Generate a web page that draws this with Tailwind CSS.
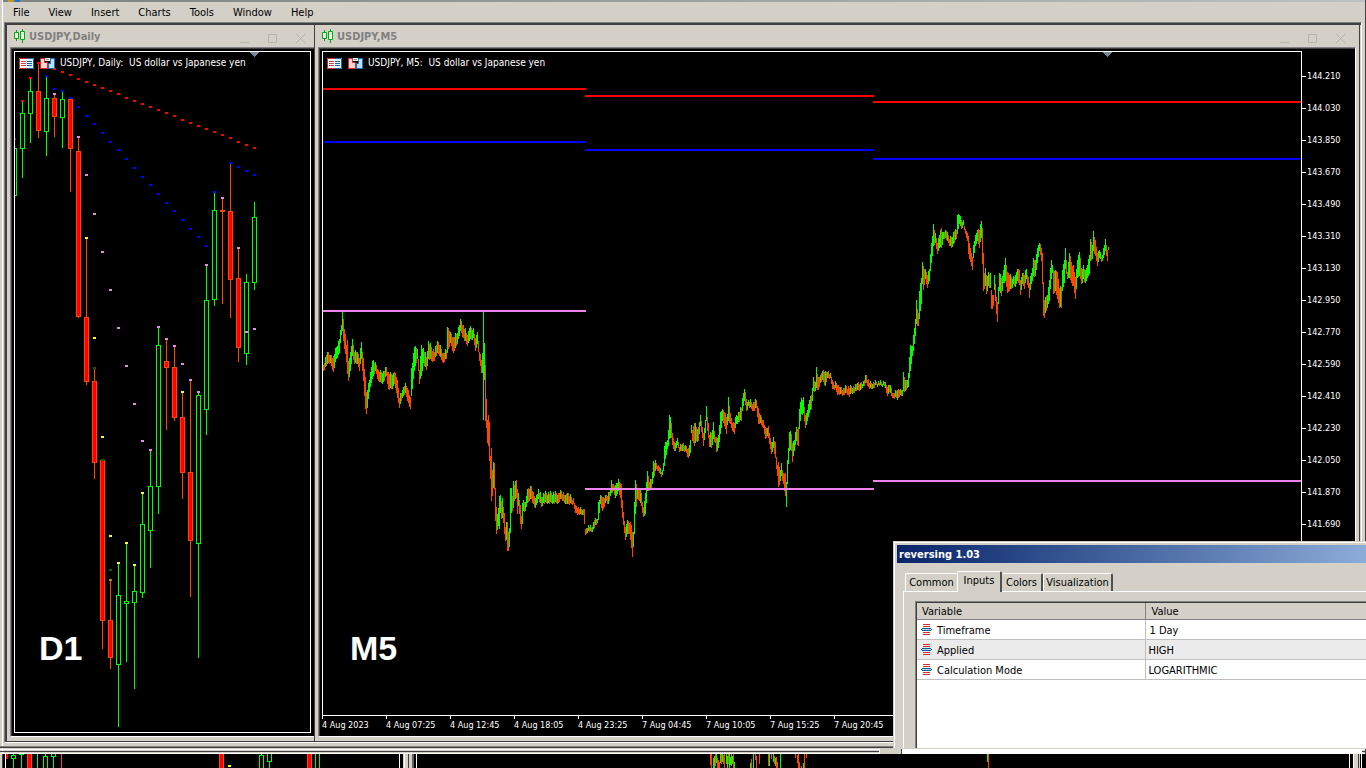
<!DOCTYPE html>
<html lang="en">
<head>
<meta charset="utf-8">
<title>USDJPY charts</title>
<script src="https://cdn.jsdelivr.net/npm/@tailwindcss/browser@4"></script>
</head>
<body class="h-screen overflow-hidden bg-[#d4d0c8] font-['DejaVu_Sans_Condensed','DejaVu_Sans',sans-serif] text-[11px] leading-4 text-black">
<svg class="hidden" aria-hidden="true">
  <defs>
    <g id="i-candles"><path d="M2.500 1v2M2.500 10v2M8.500 0v2M8.500 11v3" stroke="#00a818" fill="none"/><path d="M.5 3.500h4v6h-4zM6.500 2.500h4v8h-4z" fill="#e6f8e0" stroke="#00a818"/></g>
    <g id="i-grid"><path d="M0 0h8v11H0z" fill="#fff"/><path d="M8 .5H.5v10H8" stroke="#c8282c" fill="none"/><path d="M8 0h7v11H8z" fill="#e4f4fc"/><path d="M8 .5h6.500v10H8" stroke="#1468a8" fill="none"/><path d="M2 3.500h5M2 5.500h5M2 7.500h5" stroke="#e04040"/><path d="M8 3.500h5M8 5.500h5M8 7.500h5" stroke="#1468a8"/></g>
    <g id="i-trade"><path d="M.5.500h4v4h3v6h-7z" fill="#fcd4d0" stroke="#d02c2c"/><path d="M10.500.5h4v10h-6v-5h2z" fill="#b8e0fc" stroke="#1474c0"/><path d="M5 0h5v3H5z" fill="#fff"/><path d="M6 1.500h3" stroke="#888"/></g>
    <g id="i-param"><path d="M2 .5h7M2 2.500h7M2 8.500h7M2 10.500h7" stroke="#d83030"/><path d="M1 4h9v1h1v1h-1v1H1V6H0V5h1z" fill="#0c5c9c"/><path d="M1 5.500h9" stroke="#a8dcfc"/></g>
    <g id="i-min"><path d="M0 8.500h9" stroke="#b4b4b4"/></g>
    <g id="i-max"><path d="M.5.5h8v8h-8z" stroke="#b4b4b4" fill="none"/></g>
    <g id="i-close"><path d="M0 0l9 9M9 0L0 9" stroke="#b4b4b4"/></g>
  </defs>
</svg>

<div class="flex h-full flex-col">
  <div class="flex min-h-0 flex-1 flex-col pl-[2px]">
    <div class="flex min-h-0 flex-1 flex-col border-r border-l border-r-[#404040] border-l-white">
      <div class="flex h-[2px] shrink-0 bg-linear-to-r from-[#808080] to-[#c0c0c4]">
        <span class="ml-[5px] w-[5px] bg-[#c89c18]"></span><span class="ml-[2px] w-[5px] bg-[#1874c8]"></span>
      </div>
      <nav class="flex h-5 shrink-0 items-center gap-[19px] pt-[2px] pl-[10px]">
        <button>File</button><button>View</button><button>Insert</button><button>Charts</button><button>Tools</button><button>Window</button><button>Help</button>
      </nav>

      <main class="mr-[3px] ml-px flex min-h-0 flex-1 border-t border-r border-b border-l border-t-[#808080] border-r-white border-b-white border-l-[#808080]">
        <div class="flex min-h-0 min-w-0 flex-1 border-t-2 border-l-2 border-[#404040]">
          <!-- Daily window -->
          <section class="flex w-[308px] shrink-0 flex-col border-r border-b border-[#404040]">
            <header class="flex h-[22px] shrink-0 items-center pr-[9px] pl-[7px]">
              <svg width="12" height="14"><use href="#i-candles"/></svg>
              <h2 class="ml-[3px] flex-1 pt-[2px] font-bold text-[#808080]">USDJPY,Daily</h2>
              <div class="flex gap-[19px] pt-1">
                <button aria-label="Minimize"><svg width="9" height="9" class="block"><use href="#i-min"/></svg></button>
                <button aria-label="Maximize"><svg width="9" height="9" class="block"><use href="#i-max"/></svg></button>
                <button aria-label="Close"><svg width="9" height="9" class="block"><use href="#i-close"/></svg></button>
              </div>
            </header>
            <div class="mb-1 ml-[3px] flex min-h-0 flex-1 border-t border-b border-l border-t-[#808080] border-b-white border-l-[#808080]">
              <div class="flex min-w-0 flex-1 border-t border-l border-[#404040] bg-black pt-[2px] pr-[3px] pb-[3px] pl-[2px]">
                <div class="relative min-w-0 flex-1 overflow-hidden border border-white">
                  <svg class="block h-full w-full" shape-rendering="crispEdges"><g id="daily" transform="translate(-15 -52)"></g></svg>
                  <div class="absolute top-1 left-1 flex items-center text-[10px] leading-[14px] whitespace-pre text-white">
                    <svg width="15" height="11"><use href="#i-grid"/></svg>
                    <svg width="15" height="11" class="ml-[6px]"><use href="#i-trade"/></svg>
                    <span class="ml-[5px]">USDJPY, Daily:  US dollar vs Japanese yen</span>
                  </div>
                  <div class="absolute bottom-[64px] left-6 font-['Liberation_Sans',sans-serif] text-[34px] leading-10 font-bold text-white">D1</div>
                </div>
              </div>
            </div>
          </section>

          <!-- M5 window -->
          <section class="flex min-w-0 flex-1 flex-col border-r border-b border-[#404040]">
            <header class="flex h-[22px] shrink-0 items-center pr-[14px] pl-[7px]">
              <svg width="12" height="14"><use href="#i-candles"/></svg>
              <h2 class="ml-[3px] flex-1 pt-[2px] font-bold text-[#808080]">USDJPY,M5</h2>
              <div class="flex gap-[19px] pt-1">
                <button aria-label="Minimize"><svg width="9" height="9" class="block"><use href="#i-min"/></svg></button>
                <button aria-label="Maximize"><svg width="9" height="9" class="block"><use href="#i-max"/></svg></button>
                <button aria-label="Close"><svg width="9" height="9" class="block"><use href="#i-close"/></svg></button>
              </div>
            </header>
            <div class="mx-[3px] mb-1 flex min-h-0 flex-1 border border-t-[#808080] border-r-white border-b-white border-l-[#808080]">
              <div class="flex min-w-0 flex-1 flex-col border-t border-l border-[#404040] bg-black pt-[2px] pl-[2px] text-[9px] text-white">
                <div class="flex min-h-0 flex-1">
                  <div class="relative min-w-0 flex-1 overflow-hidden border border-white">
                    <svg class="block h-full w-full" shape-rendering="crispEdges"><g id="m5" transform="translate(-323 -52)"></g></svg>
                    <div class="absolute top-1 left-1 flex items-center text-[10px] leading-[14px] whitespace-pre">
                      <svg width="15" height="11"><use href="#i-grid"/></svg>
                      <svg width="15" height="11" class="ml-[6px]"><use href="#i-trade"/></svg>
                      <span class="ml-[5px]">USDJPY, M5:  US dollar vs Japanese yen</span>
                    </div>
                    <div class="absolute bottom-[47px] left-[27px] font-['Liberation_Sans',sans-serif] text-[34px] leading-10 font-bold">M5</div>
                  </div>
                  <ol id="prices" class="w-[53px] shrink-0 overflow-hidden pt-[9px]"></ol>
                </div>
                <ol id="dates" class="flex h-5 shrink-0 overflow-hidden"></ol>
              </div>
            </div>
          </section>
          <div class="w-px"></div>
        </div>
      </main>
      <div class="-ml-[3px] flex h-[11px] shrink-0 flex-col">
        <div class="h-[3px]"></div><div class="h-px bg-[#808080]"></div><div class="h-px bg-[#404040]"></div><div class="h-px"></div><div class="h-px bg-white"></div><div class="h-px"></div><div class="h-px bg-[#404040]"></div><div class="h-px"></div><div class="h-px bg-white"></div>
      </div>
    </div>
  </div>
  <!-- Top edge of the charts below -->
  <div class="h-[14px] shrink-0 overflow-hidden bg-black">
    <svg class="block h-full w-full" shape-rendering="crispEdges"><g id="lower" transform="translate(0 -754)"></g></svg>
  </div>
</div>

<div class="absolute right-1 bottom-[14px] left-[879px] flex h-[5px] bg-white">
  <div class="w-[22px] border-l border-white bg-[#d4d0c8]"></div><div class="w-px bg-[#404040]"></div>
</div>

<!-- Indicator settings dialog -->
<div role="dialog" aria-labelledby="dlg" class="absolute top-[541px] right-0 bottom-[19px] left-[893px] border-t border-b border-l border-[#d4d0c8] bg-[#d4d0c8]">
  <div class="flex h-full flex-col overflow-hidden border-t border-l border-white pt-[2px] pl-[2px]">
    <h1 id="dlg" class="h-[18px] shrink-0 bg-linear-to-r from-[#0a246a] to-[#8cacd8] pt-px pl-[2px] leading-[18px] font-bold text-white">reversing 1.03</h1>
    <div role="tablist" class="mt-2 ml-2 flex h-5 shrink-0 items-end">
      <button role="tab" class="h-[18px] w-[52px] rounded-t-[2px] border-t border-l border-white pt-px">Common</button>
      <button role="tab" aria-selected="true" class="relative -mb-px h-[21px] w-[45px] rounded-t-[2px] border-t border-r-2 border-l border-t-white border-r-[#505050] border-l-white bg-[#d4d0c8] pb-[2px]">Inputs</button>
      <button role="tab" class="h-[18px] w-[41px] rounded-t-[2px] border-t border-r-2 border-t-white border-r-[#505050] pt-px">Colors</button>
      <button role="tab" class="h-[18px] w-[70px] rounded-t-[2px] border-t border-r-2 border-l border-t-white border-r-[#505050] border-l-white pt-px">Visualization</button>
    </div>
    <div class="ml-[6px] flex min-h-0 flex-1 border-t border-l border-white pt-[9px] pl-[11px]">
      <div class="min-w-0 flex-1 border-t border-l border-[#808080]">
        <div class="h-full border-t border-l border-[#404040] bg-white">
          <table class="w-full table-fixed border-collapse text-left">
            <thead>
              <tr class="h-4 bg-[#d4d0c8]"><th class="w-[228px] border-r border-b border-[#808080] p-0 pt-[2px] pl-[5px] leading-[14px] font-normal">Variable</th><th class="border-b border-[#808080] p-0 pt-[2px] pl-[6px] leading-[14px] font-normal">Value</th></tr>
            </thead>
            <tbody>
              <tr class="h-5 border-b border-[#c0c0c0]"><td class="border-r border-[#c0c0c0] p-0 pl-1"><span class="flex items-center gap-[5px]"><svg width="11" height="11"><use href="#i-param"/></svg><span class="pt-[2px]">Timeframe</span></span></td><td class="p-0 pt-[2px] pl-1">1 Day</td></tr>
              <tr class="h-5 border-b border-[#c0c0c0] bg-[#ebebeb]"><td class="border-r border-[#c0c0c0] p-0 pl-1"><span class="flex items-center gap-[5px]"><svg width="11" height="11"><use href="#i-param"/></svg><span class="pt-[2px]">Applied</span></span></td><td class="p-0 pt-[2px] pl-[3px]">HIGH</td></tr>
              <tr class="h-5 border-b border-[#c0c0c0]"><td class="border-r border-[#c0c0c0] p-0 pl-1"><span class="flex items-center gap-[5px]"><svg width="11" height="11"><use href="#i-param"/></svg><span class="pt-[2px]">Calculation Mode</span></span></td><td class="p-0 pt-[2px] pl-[3px]">LOGARITHMIC</td></tr>
            </tbody>
          </table>
        </div>
      </div>
    </div>
  </div>
</div>

<script>
const LIME = '#00ff00', ORANGE = '#ff4500', RED = '#ff0000', BLUE = '#0000ff', VIOLET = '#ee82ee', YELLOW = '#ffff00', DARK = '#006400';
const rect = (x, y, w, h, c) => `<rect x="${x}" y="${y}" width="${w}" height="${h}" fill="${c}"/>`;

// Daily candles: x, high, low, body top, body bottom, rising
const daily = [[14,148,195,148,195,1],[22,101,178,113,148,1],[30,78,143,91,113,1],[38,63,138,91,130,0],[46,76,156,98,131,1],[54,94,137,98,116,0],[62,91,148,99,117,1],[70,98,192,99,148,0],[78,137,318,151,316,0],[86,238,385,317,381,0],[94,368,479,381,462,0],[102,460,649,460,620,0],[110,580,669,620,657,0],[118,563,727,595,664,1],[126,543,662,601,603,1],[134,565,689,591,602,1],[142,493,598,524,592,1],[150,450,568,486,530,1],[158,327,514,345,486,1],[166,339,430,361,367,0],[174,346,421,367,417,0],[182,392,499,417,472,0],[190,380,597,472,540,0],[198,392,658,395,543,1],[206,265,435,300,409,1],[214,192,306,210,299,1],[222,198,304,210,211,0],[230,163,318,211,279,0],[238,248,362,278,347,0],[246,274,365,282,353,1],[254,202,290,217,282,1]];
const candle = ([x, hi, lo, t, b, up]) => {
  const c = up ? LIME : ORANGE;
  return rect(x, hi, 1, lo - hi, c) + rect(x - 2, t, 5, b - t + 1, c) + (b - t > 1 ? rect(x - 1, t + 1, 3, b - t - 1, up ? '#000' : RED) : '');
};
const dot = (c, list) => list.map(([x, y]) => rect(x - 1, y - 1, 3, 2, c)).join('');
const reds = [[14,139],[22,101],[30,78],[38,63]];
for (let i = 0; i <= 26; i++) reds.push([46 + i * 8, Math.round(66 + i * 3.15)]);
const blues = [[46,76],[54,89],[62,91],[70,98],[214,192],[230,163],[238,167],[246,171],[254,175]];
for (let i = 0; i <= 16; i++) blues.push([78 + i * 8, Math.round(107 + i * 8.69)]);
document.getElementById('daily').innerHTML =
  daily.map(candle).join('') + dot(RED, reds) + dot(BLUE, blues) +
  dot(VIOLET, [[54,94],[78,137],[86,175],[94,214],[102,252],[110,290],[118,328],[126,366],[134,404],[142,441],[150,450],[158,327],[166,339],[174,346],[182,364],[190,380],[198,392],[206,265],[222,198],[238,248],[246,332],[254,329]]) +
  dot(YELLOW, [[86,238],[94,338],[102,437],[110,536],[118,563],[126,543],[134,565],[142,493],[182,392]]) +
  dot(DARK, [[94,368],[102,460],[110,570]]) + dot('#c08010', [[110,580]]) +
  '<path d="M250 52h9l-4.500 5z" fill="#778899"/>';

// M5 price range samples: x, high, low
const raw = `323 365 370 327 352 363 330 355 362 333 356 371 336 347 358 339 339 352 341 325 334 342 312 330 343 319 340 346 345 361 347 340 373 348 361 380 350 352 370 352 339 355 354 352 363 357 352 363 359 358 370 361 342 358 363 358 380 365 377 408 366 392 413 369 380 391 372 361 378 375 362 370 378 370 380 382 373 383 386 367 375 388 372 388 392 375 388 394 372 383 397 380 397 399 398 407 402 390 397 405 383 392 407 388 400 410 397 408 411 368 395 414 347 370 417 349 358 419 370 383 421 345 375 423 348 362 426 357 369 428 341 358 431 347 360 434 352 360 437 341 352 439 345 355 443 353 362 446 350 358 447 327 352 450 332 342 453 337 352 457 333 343 460 319 330 463 325 337 467 335 345 469 328 340 473 328 337 475 338 350 477 332 343 479 352 360 481 360 372 482 353 372 483 312 419 484 343 379 485 365 420 486 399 427 487 420 442 488 415 445 489 422 460 490 456 478 491 448 500 492 470 495 493 462 487 494 463 488 495 488 520 496 507 533 497 514 529 498 508 525 499 496 528 500 495 512 501 501 518 502 498 517 503 507 522 504 513 533 505 527 540 506 522 539 507 522 550 508 532 550 509 528 546 510 488 532 511 488 512 512 496 510 513 481 507 514 485 500 516 480 497 517 489 513 518 493 505 519 500 513 520 505 523 521 516 528 522 503 523 523 500 510 525 502 510 527 489 502 529 489 500 531 486 498 533 492 503 535 498 507 538 489 498 541 497 506 543 493 502 558 493 502 561 491 498 565 495 503 567 493 503 571 497 503 573 498 503 575 505 512 578 507 513 582 510 514 583 509 514 584 509 523 585 529 534 588 525 530 591 528 531 594 520 527 597 519 522 598 502 519 600 495 503 602 497 510 604 498 506 606 495 500 608 492 503 610 490 495 611 480 492 613 484 490 615 485 497 618 479 490 620 483 497 621 484 507 623 512 524 625 527 539 627 520 533 629 523 533 631 525 547 632 532 556 633 532 546 634 502 533 635 480 513 637 488 498 639 490 500 641 493 505 643 507 516 645 493 513 647 471 490 649 482 490 651 479 487 653 461 477 656 463 468 659 467 472 661 472 476 663 463 470 664 446 465 667 440 448 668 430 445 669 415 438 671 423 437 673 438 448 675 443 450 677 438 444 679 447 451 682 444 450 685 445 450 688 448 457 690 440 452 691 425 432 692 430 440 694 423 445 696 427 440 698 427 440 700 415 425 702 427 437 703 433 445 705 420 432 706 406 420 708 423 437 709 435 446 711 433 447 713 422 438 715 437 442 716 437 451 718 435 447 720 412 433 722 409 420 724 412 425 726 417 433 727 414 424 728 397 420 730 413 423 732 423 430 734 423 433 736 415 423 738 412 421 741 408 420 742 398 410 744 389 400 746 399 410 748 400 405 751 402 408 753 402 410 756 400 407 758 408 423 760 415 422 763 420 427 765 427 438 767 428 435 768 426 437 770 438 448 771 442 453 773 437 447 775 442 457 776 457 468 777 465 475 778 462 486 780 470 480 781 463 475 783 473 483 785 473 495 786 482 506 787 460 483 788 448 463 789 432 450 791 434 450 792 443 461 794 440 450 796 427 440 798 427 445 799 409 428 801 398 413 803 397 412 805 415 427 807 410 420 809 400 412 811 395 408 813 377 390 815 382 390 816 367 387 818 377 389 820 375 382 822 371 379 825 371 385 827 372 377 830 373 377 832 380 388 834 385 389 835 381 387 837 385 394 840 387 393 843 388 394 846 386 392 849 388 396 851 386 392 854 387 392 857 383 389 860 383 389 863 381 385 866 375 382 869 383 388 873 382 387 876 382 384 884 382 385 887 387 395 889 385 391 891 388 395 893 393 397 896 391 397 897 390 399 900 389 394 902 390 395 903 372 390 905 380 390 907 380 387 908 373 386 909 357 377 910 345 370 912 346 355 913 335 350 915 319 335 916 300 323 918 313 325 919 291 318 921 278 303 922 262 283 923 266 289 925 269 278 927 275 287 929 269 280 931 243 262 933 224 245 935 233 242 937 243 253 939 235 247 941 228 247 943 232 238 945 230 237 947 232 240 949 239 245 951 237 247 954 231 242 956 230 238 957 215 233 959 215 223 961 220 228 963 220 224 965 229 233 967 233 240 968 236 253 970 248 261 972 257 269 973 245 257 975 235 245 977 230 240 979 230 247 981 221 237 982 228 263 983 253 290 984 273 288 985 268 285 986 275 293 988 272 285 990 273 287 991 290 308 993 295 305 994 275 289 996 297 313 997 302 321 998 287 303 999 273 290 1001 278 295 1003 270 282 1005 258 280 1007 272 292 1009 275 290 1011 277 288 1013 276 283 1015 275 286 1017 269 280 1019 270 284 1020 280 294 1022 273 283 1024 275 288 1026 269 278 1028 277 287 1029 283 297 1031 273 283 1033 258 275 1035 260 275 1037 248 262 1039 243 250 1041 248 260 1042 253 283 1043 282 315 1044 300 317 1045 297 312 1047 295 307 1049 280 300 1051 260 278 1052 265 272 1053 270 293 1055 270 290 1057 272 298 1059 288 307 1061 287 307 1062 270 290 1064 260 282 1065 248 268 1067 272 278 1069 253 277 1071 262 282 1073 265 285 1075 277 298 1077 260 277 1079 252 275 1081 268 283 1083 265 278 1085 270 282 1087 265 277 1089 255 273 1090 239 260 1092 245 258 1093 231 250 1095 240 255 1097 253 265 1099 250 257 1101 257 261 1103 248 257 1105 239 250 1107 250 260 1108 247 249`.split(' ').map(Number);
let bars = '', prev = 368;
for (let i = 0; i < raw.length; i += 3) {
  const [x, t, b, nx, nt, nb] = raw.slice(i, i + 6);
  for (let k = x; k < (nx || x + 1); k++) {
    const f = nx ? (k - x) / (nx - x) : 0, noise = k === x ? 0 : (k * 7) % 5 - 2;
    const top = Math.round(t + f * ((nt || t) - t) + noise), bot = Math.round(b + f * ((nb || b) - b) + noise / 2);
    const mid = (top + bot) / 2, d = mid - prev;
    const up = Math.abs(d) < 2 ? (k * 3) % 5 < 2 : d < 0;
    bars += rect(k, top, 1, Math.max(3, bot - top + 1), up || k === 483 || k === 786 ? LIME : ORANGE);
    prev = mid;
  }
}
const level = (c, a, b, d) => rect(323, a, 263, 2, c) + rect(585, b, 289, 2, c) + rect(873, d, 4000, 2, c);
document.getElementById('m5').innerHTML = bars + level(RED, 88, 95, 101) + level(BLUE, 141, 149, 158) + level(VIOLET, 310, 488, 480) +
  '<path d="M1103 52h9l-4.500 5z" fill="#778899"/>';

document.getElementById('prices').innerHTML = Array.from({ length: 15 }, (_, i) =>
  `<li class="flex h-8 items-center gap-[1px]"><i class="h-px w-1 bg-white"></i>${((144210 - i * 180) / 1000).toFixed(3)}</li>`).join('');
document.getElementById('dates').innerHTML = ['4 Aug 2023', '4 Aug 07:25', '4 Aug 12:45', '4 Aug 18:05', '4 Aug 23:25', '7 Aug 04:45', '7 Aug 10:05', '7 Aug 15:25', '7 Aug 20:45'].map(s =>
  `<li class="w-16 shrink-0 leading-3 whitespace-nowrap"><i class="block h-[3px] w-px bg-white"></i>${s}</li>`).join('');

// Lower charts
let low = rect(0,754,2,14,'#d4d0c8') + rect(2,754,1,14,'#404040') + rect(5,754,1,14,'#fff') + rect(6,754,2,5,RED);
low += [[13,750,775,755,758,1],[21,750,775,750,754,1],[29,750,775,750,775,0],[45,750,775,756,775,1],[53,750,775,750,756,1],[221,750,775,750,775,0],[261,750,775,755,775,1],[269,750,775,750,761,1],[309,750,775,750,775,0]].map(candle).join('');
low += rect(37,754,1,14,LIME) + rect(61,754,1,14,ORANGE) + rect(228,765,3,2,YELLOW) + rect(315,754,1,14,LIME) + rect(319,754,1,14,LIME);
low += rect(399,754,1,14,'#fff') + rect(403,754,10,14,'#d4d0c8') + rect(404,754,1,14,'#fff') + rect(408,754,1,14,'#404040') + rect(412,754,2,14,'#606060') + rect(416,754,1,14,'#fff');
low += [[710,754,11,0],[711,754,14,0],[713,758,10,1],[714,756,12,1],[715,754,12,0],[716,754,9,1],[717,758,10,0],[718,760,8,0],[719,762,6,0],[720,754,9,1],[721,754,10,0],[722,754,8,1],[723,755,9,0],[724,754,14,0],[726,754,10,1],[727,756,12,1],[728,754,10,0],[729,754,14,1],[730,757,8,1],[731,754,12,1],[732,756,8,1],[733,754,14,0],[734,762,6,1],[750,763,5,1],[751,759,9,0],[753,754,14,1],[755,754,6,0],[756,756,12,0],[759,754,10,0],[768,754,12,0],[769,754,12,1],[771,754,5,0],[773,754,8,1],[774,756,8,0],[775,758,8,1],[776,757,11,0],[777,762,6,0],[780,754,14,1],[795,754,4,0],[797,755,8,0],[798,754,14,0],[799,762,6,0],[801,766,2,0],[803,763,5,1],[804,754,14,0],[806,754,4,0],[987,754,8,1],[988,754,14,0]].map(([x, y, h, g]) => rect(x, y, 1, h, g ? LIME : ORANGE)).join('');
low += rect(1349,754,1,14,'#fff') + rect(1353,754,1,14,'#fff') + rect(1354,754,6,14,'#d4d0c8') + rect(1358,754,1,14,'#404040') + rect(1361,754,1,14,'#fff');
document.getElementById('lower').innerHTML = low;
</script>
</body>
</html>
